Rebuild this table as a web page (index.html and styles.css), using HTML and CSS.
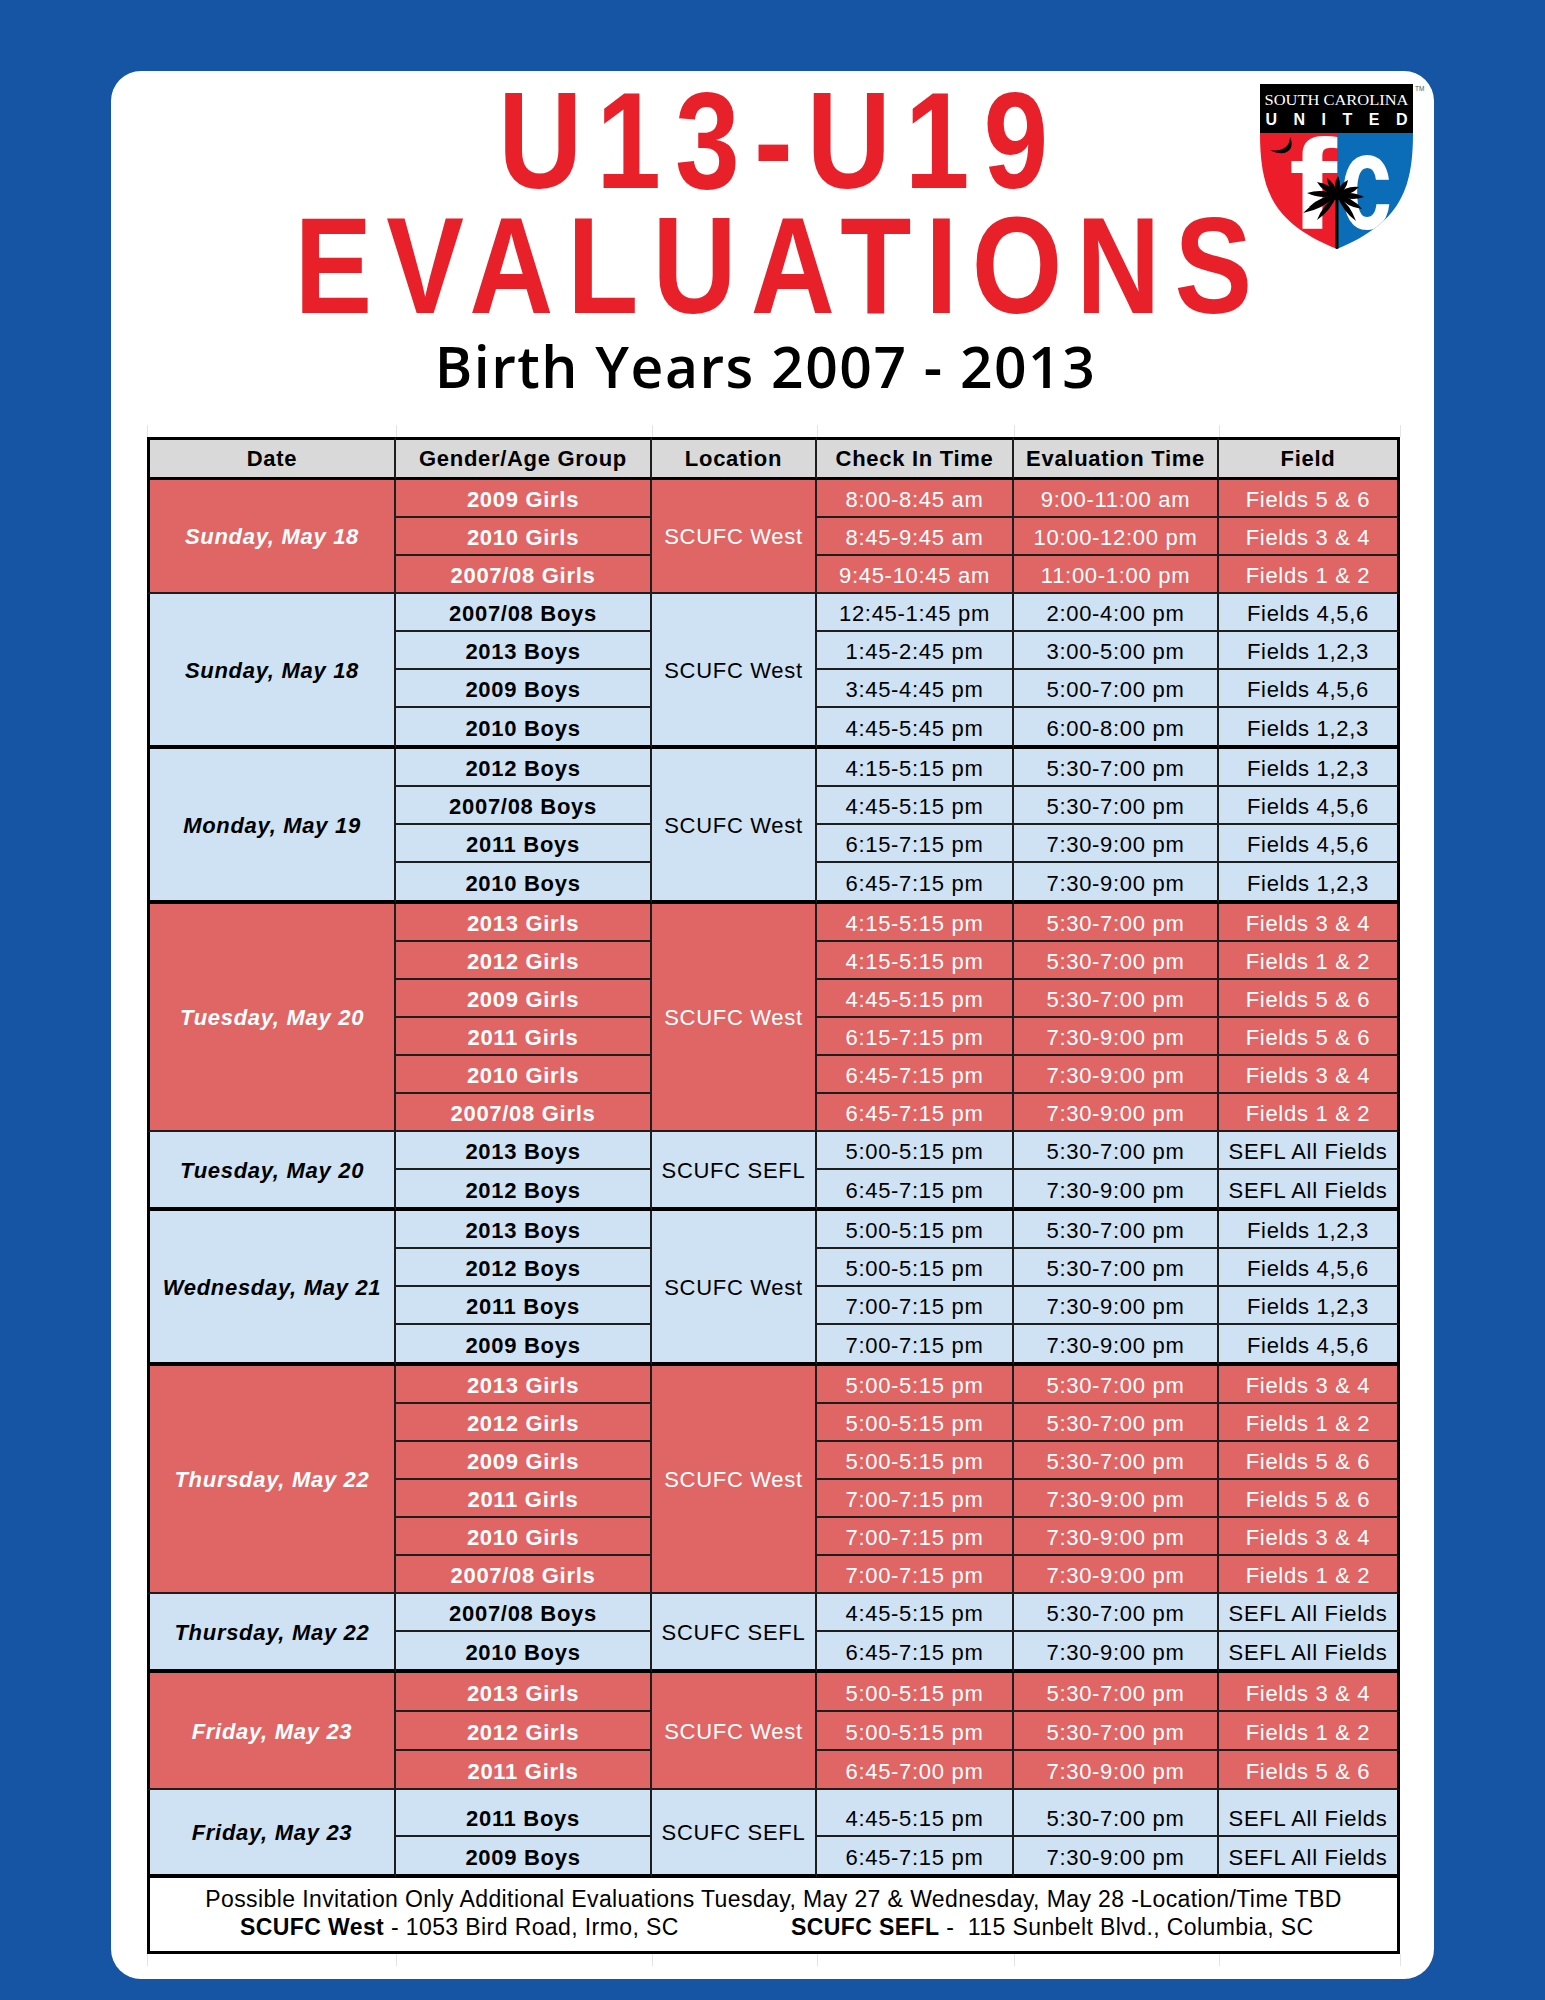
FILE: index.html
```html
<!DOCTYPE html>
<html lang="en">
<head>
<meta charset="utf-8">
<title>U13-U19 Evaluations</title>
<link rel="stylesheet" href="styles.css">
</head>
<body>
<div class="card">
  <svg class="logo" width="170" height="170" viewBox="0 0 170 170" aria-label="South Carolina United FC">
    <defs>
      <clipPath id="shieldClip">
        <path d="M1 50 H154 C154 108 140 140 78 166 C14 140 1 108 1 50 Z"/>
      </clipPath>
    </defs>
    <rect x="1" y="1" width="153" height="50" fill="#000"/>
    <text x="77.5" y="22" text-anchor="middle" font-family="Liberation Serif, serif" font-size="15.5" fill="#fff" textLength="144" lengthAdjust="spacingAndGlyphs">SOUTH CAROLINA</text>
    <text x="77.5" y="42" text-anchor="middle" font-family="Liberation Sans, sans-serif" font-weight="bold" font-size="16" fill="#fff" textLength="142" lengthAdjust="spacing">UNITED</text>
    <g clip-path="url(#shieldClip)">
      <rect x="0" y="50" width="78" height="120" fill="#ec1c2b"/>
      <rect x="78" y="50" width="80" height="120" fill="#0b6cb7"/>
      <path d="M31 54 C37 67 26 75 11 67 C24 69 31 63 31 54 Z" fill="#000"/>
      <text x="30" y="146" font-family="Liberation Sans, sans-serif" font-weight="bold" font-size="128" fill="#fff" textLength="48" lengthAdjust="spacingAndGlyphs">f</text>
      <text x="81" y="146" font-family="Liberation Sans, sans-serif" font-weight="bold" font-size="138" fill="#fff" textLength="52" lengthAdjust="spacingAndGlyphs">c</text>
      <rect x="76.5" y="112" width="3" height="56" fill="#000"/>
      <g fill="#000">
        <path d="M78 112 Q58.2 115.7 44 130 Q63.8 126.3 78 112 Z"/>
        <path d="M78 112 Q63.4 105 48 110 Q62.6 117 78 112 Z"/>
        <path d="M78 112 Q71.3 100.5 58 99 Q64.7 110.5 78 112 Z"/>
        <path d="M78 112 Q77.3 101 68 95 Q68.7 106 78 112 Z"/>
        <path d="M78 112 Q83.5 102.8 79 93 Q73.5 102.2 78 112 Z"/>
        <path d="M78 112 Q87.5 107.5 89 97 Q79.5 101.5 78 112 Z"/>
        <path d="M78 112 Q91 113.6 100 104 Q87 102.4 78 112 Z"/>
        <path d="M78 112 Q91.1 119 105 114 Q91.9 107 78 112 Z"/>
        <path d="M78 112 Q87.6 124.2 103 126 Q93.4 113.8 78 112 Z"/>
        <path d="M78 112 Q83.5 128 97 138 Q91.5 122 78 112 Z"/>
        <path d="M78 112 Q64.1 121.4 58 137 Q71.9 127.6 78 112 Z"/>
        <path d="M78 112 Q61.6 112.5 50 124 Q66.4 123.5 78 112 Z"/>
        <ellipse cx="78" cy="113" rx="6" ry="4"/>
      </g>
    </g>
    <text x="156" y="8" font-family="Liberation Sans, sans-serif" font-size="6.5" fill="#555">TM</text>
  </svg>

  <h1 class="title"><span class="t1">U13-U19</span><span class="t2">EVALUATIONS</span></h1>
  <p class="sub">Birth Years 2007 - 2013</p>

  <div class="grid gtop"><i></i><i></i><i></i><i></i><i></i><i></i><i></i></div>

  <table class="sched">
    <colgroup>
      <col class="c1"><col class="c2"><col class="c3"><col class="c4"><col class="c5"><col class="c6">
    </colgroup>
    <thead>
      <tr><th class="first">Date</th><th>Gender/Age Group</th><th>Location</th><th>Check In Time</th><th>Evaluation Time</th><th class="last">Field</th></tr>
    </thead>
    <tbody class="red">
      <tr><td class="date m" rowspan="3">Sunday, May 18</td><td class="grp">2009 Girls</td><td class="loc m" rowspan="3">SCUFC West</td><td>8:00-8:45 am</td><td>9:00-11:00 am</td><td class="last">Fields 5 &amp; 6</td></tr>
      <tr><td class="grp">2010 Girls</td><td>8:45-9:45 am</td><td>10:00-12:00 pm</td><td class="last">Fields 3 &amp; 4</td></tr>
      <tr><td class="grp">2007/08 Girls</td><td>9:45-10:45 am</td><td>11:00-1:00 pm</td><td class="last">Fields 1 &amp; 2</td></tr>
    </tbody>
    <tbody class="blue tb">
      <tr><td class="date m" rowspan="4">Sunday, May 18</td><td class="grp">2007/08 Boys</td><td class="loc m" rowspan="4">SCUFC West</td><td>12:45-1:45 pm</td><td>2:00-4:00 pm</td><td class="last">Fields 4,5,6</td></tr>
      <tr><td class="grp">2013 Boys</td><td>1:45-2:45 pm</td><td>3:00-5:00 pm</td><td class="last">Fields 1,2,3</td></tr>
      <tr><td class="grp">2009 Boys</td><td>3:45-4:45 pm</td><td>5:00-7:00 pm</td><td class="last">Fields 4,5,6</td></tr>
      <tr><td class="grp">2010 Boys</td><td>4:45-5:45 pm</td><td>6:00-8:00 pm</td><td class="last">Fields 1,2,3</td></tr>
    </tbody>
    <tbody class="blue tb">
      <tr><td class="date m" rowspan="4">Monday, May 19</td><td class="grp">2012 Boys</td><td class="loc m" rowspan="4">SCUFC West</td><td>4:15-5:15 pm</td><td>5:30-7:00 pm</td><td class="last">Fields 1,2,3</td></tr>
      <tr><td class="grp">2007/08 Boys</td><td>4:45-5:15 pm</td><td>5:30-7:00 pm</td><td class="last">Fields 4,5,6</td></tr>
      <tr><td class="grp">2011 Boys</td><td>6:15-7:15 pm</td><td>7:30-9:00 pm</td><td class="last">Fields 4,5,6</td></tr>
      <tr><td class="grp">2010 Boys</td><td>6:45-7:15 pm</td><td>7:30-9:00 pm</td><td class="last">Fields 1,2,3</td></tr>
    </tbody>
    <tbody class="red">
      <tr><td class="date m" rowspan="6">Tuesday, May 20</td><td class="grp">2013 Girls</td><td class="loc m" rowspan="6">SCUFC West</td><td>4:15-5:15 pm</td><td>5:30-7:00 pm</td><td class="last">Fields 3 &amp; 4</td></tr>
      <tr><td class="grp">2012 Girls</td><td>4:15-5:15 pm</td><td>5:30-7:00 pm</td><td class="last">Fields 1 &amp; 2</td></tr>
      <tr><td class="grp">2009 Girls</td><td>4:45-5:15 pm</td><td>5:30-7:00 pm</td><td class="last">Fields 5 &amp; 6</td></tr>
      <tr><td class="grp">2011 Girls</td><td>6:15-7:15 pm</td><td>7:30-9:00 pm</td><td class="last">Fields 5 &amp; 6</td></tr>
      <tr><td class="grp">2010 Girls</td><td>6:45-7:15 pm</td><td>7:30-9:00 pm</td><td class="last">Fields 3 &amp; 4</td></tr>
      <tr><td class="grp">2007/08 Girls</td><td>6:45-7:15 pm</td><td>7:30-9:00 pm</td><td class="last">Fields 1 &amp; 2</td></tr>
    </tbody>
    <tbody class="blue tb">
      <tr><td class="date m" rowspan="2">Tuesday, May 20</td><td class="grp">2013 Boys</td><td class="loc m" rowspan="2">SCUFC SEFL</td><td>5:00-5:15 pm</td><td>5:30-7:00 pm</td><td class="last">SEFL All Fields</td></tr>
      <tr><td class="grp">2012 Boys</td><td>6:45-7:15 pm</td><td>7:30-9:00 pm</td><td class="last">SEFL All Fields</td></tr>
    </tbody>
    <tbody class="blue tb">
      <tr><td class="date m" rowspan="4">Wednesday, May 21</td><td class="grp">2013 Boys</td><td class="loc m" rowspan="4">SCUFC West</td><td>5:00-5:15 pm</td><td>5:30-7:00 pm</td><td class="last">Fields 1,2,3</td></tr>
      <tr><td class="grp">2012 Boys</td><td>5:00-5:15 pm</td><td>5:30-7:00 pm</td><td class="last">Fields 4,5,6</td></tr>
      <tr><td class="grp">2011 Boys</td><td>7:00-7:15 pm</td><td>7:30-9:00 pm</td><td class="last">Fields 1,2,3</td></tr>
      <tr><td class="grp">2009 Boys</td><td>7:00-7:15 pm</td><td>7:30-9:00 pm</td><td class="last">Fields 4,5,6</td></tr>
    </tbody>
    <tbody class="red">
      <tr><td class="date m" rowspan="6">Thursday, May 22</td><td class="grp">2013 Girls</td><td class="loc m" rowspan="6">SCUFC West</td><td>5:00-5:15 pm</td><td>5:30-7:00 pm</td><td class="last">Fields 3 &amp; 4</td></tr>
      <tr><td class="grp">2012 Girls</td><td>5:00-5:15 pm</td><td>5:30-7:00 pm</td><td class="last">Fields 1 &amp; 2</td></tr>
      <tr><td class="grp">2009 Girls</td><td>5:00-5:15 pm</td><td>5:30-7:00 pm</td><td class="last">Fields 5 &amp; 6</td></tr>
      <tr><td class="grp">2011 Girls</td><td>7:00-7:15 pm</td><td>7:30-9:00 pm</td><td class="last">Fields 5 &amp; 6</td></tr>
      <tr><td class="grp">2010 Girls</td><td>7:00-7:15 pm</td><td>7:30-9:00 pm</td><td class="last">Fields 3 &amp; 4</td></tr>
      <tr><td class="grp">2007/08 Girls</td><td>7:00-7:15 pm</td><td>7:30-9:00 pm</td><td class="last">Fields 1 &amp; 2</td></tr>
    </tbody>
    <tbody class="blue tb">
      <tr><td class="date m" rowspan="2">Thursday, May 22</td><td class="grp">2007/08 Boys</td><td class="loc m" rowspan="2">SCUFC SEFL</td><td>4:45-5:15 pm</td><td>5:30-7:00 pm</td><td class="last">SEFL All Fields</td></tr>
      <tr><td class="grp">2010 Boys</td><td>6:45-7:15 pm</td><td>7:30-9:00 pm</td><td class="last">SEFL All Fields</td></tr>
    </tbody>
    <tbody class="red fri">
      <tr><td class="date m" rowspan="3">Friday, May 23</td><td class="grp">2013 Girls</td><td class="loc m" rowspan="3">SCUFC West</td><td>5:00-5:15 pm</td><td>5:30-7:00 pm</td><td class="last">Fields 3 &amp; 4</td></tr>
      <tr><td class="grp">2012 Girls</td><td>5:00-5:15 pm</td><td>5:30-7:00 pm</td><td class="last">Fields 1 &amp; 2</td></tr>
      <tr><td class="grp">2011 Girls</td><td>6:45-7:00 pm</td><td>7:30-9:00 pm</td><td class="last">Fields 5 &amp; 6</td></tr>
    </tbody>
    <tbody class="blue tb fri2">
      <tr class="tall"><td class="date m" rowspan="2">Friday, May 23</td><td class="grp">2011 Boys</td><td class="loc m" rowspan="2">SCUFC SEFL</td><td>4:45-5:15 pm</td><td>5:30-7:00 pm</td><td class="last">SEFL All Fields</td></tr>
      <tr><td class="grp">2009 Boys</td><td>6:45-7:15 pm</td><td>7:30-9:00 pm</td><td class="last">SEFL All Fields</td></tr>
    </tbody>
    <tfoot>
      <tr>
        <td colspan="6" class="foot">
          <div class="fl1">Possible Invitation Only Additional Evaluations Tuesday, May 27 &amp; Wednesday, May 28 -Location/Time TBD</div>
          <div class="fl2"><span class="addr"><b>SCUFC West</b> - 1053 Bird Road, Irmo, SC</span><span class="addr"><b>SCUFC SEFL</b> -&nbsp; 115 Sunbelt Blvd., Columbia, SC</span></div>
        </td>
      </tr>
    </tfoot>
  </table>

  <div class="grid gbot"><i></i><i></i><i></i><i></i><i></i><i></i><i></i></div>
</div>
</body>
</html>
```

FILE: styles.css
```css
* { box-sizing: border-box; }

html, body {
  margin: 0;
  padding: 0;
}

body {
  background: #1555a3;
  width: 1545px;
  height: 2000px;
  overflow: hidden;
  font-family: "Liberation Sans", Arial, sans-serif;
}

.card {
  position: relative;
  margin: 71px 0 0 111px;
  width: 1323px;
  height: 1908px;
  background: #fff;
  border-radius: 30px;
  padding: 7px 34px 0 36px;
}

.logo {
  position: absolute;
  left: 1148px;
  top: 12px;
}

.title {
  margin: 0;
  text-align: center;
  color: #e8202a;
  font-family: "Liberation Sans", Arial, sans-serif;
  font-weight: 700;
  font-size: 137px;
  line-height: 125px;
}

.title span {
  display: block;
  transform: scaleX(0.85);
  transform-origin: center;
  letter-spacing: 16.5px;
  padding-left: 16px;
}

.sub {
  margin: 8px 0 0;
  text-align: center;
  font-family: "Open Sans", "Liberation Sans", sans-serif;
  font-weight: 600;
  font-size: 57px;
  line-height: 60px;
  letter-spacing: 1.5px;
  color: #000;
  padding-right: 16px;
}

.grid {
  display: grid;
  grid-template-columns: 249px 256px 165px 197px 205px 181px 4px;
  width: 1257px;
  height: 12px;
}

.grid i {
  border-left: 1px solid #e4e4e4;
}

.gtop { margin-top: 29px; }

.sched {
  width: 1253px;
  table-layout: fixed;
  border-collapse: separate;
  border-spacing: 0;
  font-size: 22px;
  letter-spacing: 0.7px;
}

.c1 { width: 249px; }
.c2 { width: 256px; }
.c3 { width: 165px; }
.c4 { width: 197px; }
.c5 { width: 205px; }
.c6 { width: 181px; }

.sched th,
.sched td {
  padding: 0 0 3px;
  text-align: center;
  white-space: nowrap;
  line-height: 26px;
  border-right: 2px solid #1e1e1e;
  border-bottom: 2px solid #1e1e1e;
  vertical-align: bottom;
}

.sched thead tr { height: 43px; }

.sched th {
  background: #d9d9d9;
  font-weight: 700;
  color: #000;
  border-top: 3px solid #000;
  border-bottom: 3px solid #000;
  vertical-align: middle;
  padding: 1px 0 0;
}

.sched .first,
.sched td.date {
  border-left: 3px solid #000;
}

.sched .last {
  border-right: 3px solid #000;
}

.sched tbody tr { height: 38px; }
.sched tbody.tb tr:last-child { height: 41px; }
.sched tbody.fri tr { height: 39px; }
.sched tbody.fri2 tr.tall { height: 47px; }

.sched tbody.tb tr:last-child td,
.sched tbody.tb td.m {
  border-bottom: 4px solid #000;
}

.sched td.m {
  vertical-align: middle;
  padding: 2px 0 0;
}

.red td {
  background: #e06666;
  color: #fff;
}

.blue td {
  background: #cfe2f3;
  color: #000;
}

.date {
  font-weight: 700;
  font-style: italic;
}

.grp {
  font-weight: 700;
}

.sched td.foot {
  border-left: 3px solid #000;
  border-right: 3px solid #000;
  border-bottom: 3px solid #000;
  background: #fff;
  color: #000;
  height: 76px;
  padding: 7px 0 3px;
  vertical-align: top;
  font-size: 23px;
  letter-spacing: 0.4px;
  line-height: 28px;
}

.fl1 {
  text-align: center;
}

.fl2 {
  display: flex;
  justify-content: flex-start;
  padding-left: 90px;
}

.addr:first-child {
  width: 551px;
  text-align: left;
}

.gbot { height: 12px; }
```
